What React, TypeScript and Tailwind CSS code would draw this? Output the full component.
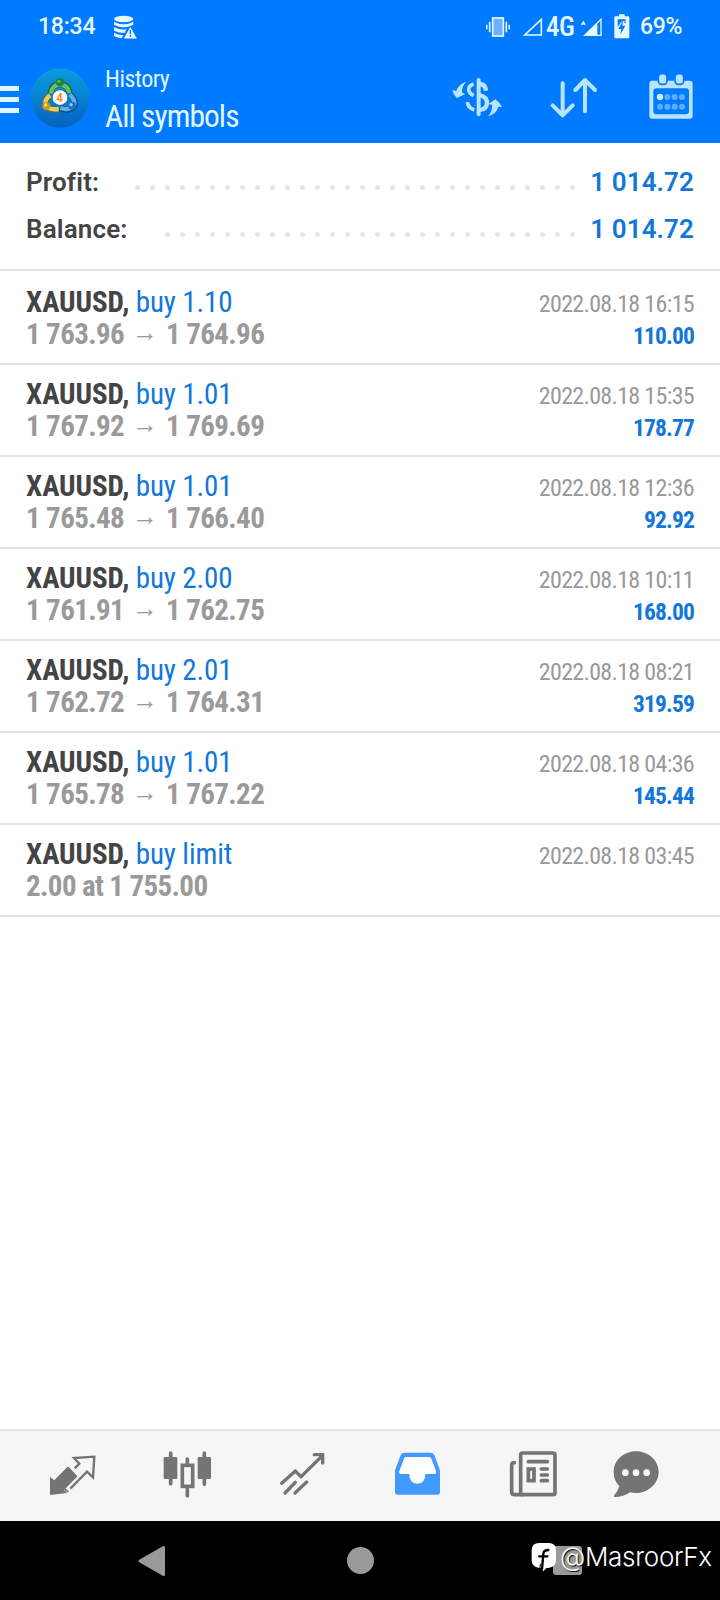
import React from 'react';

interface Deal {
  symbol: string;
  action: string;
  from: string;
  to?: string;
  time: string;
  profit?: string;
}

const deals: Deal[] = [
  { symbol: 'XAUUSD', action: 'buy 1.10', from: '1 763.96', to: '1 764.96', time: '2022.08.18 16:15', profit: '110.00' },
  { symbol: 'XAUUSD', action: 'buy 1.01', from: '1 767.92', to: '1 769.69', time: '2022.08.18 15:35', profit: '178.77' },
  { symbol: 'XAUUSD', action: 'buy 1.01', from: '1 765.48', to: '1 766.40', time: '2022.08.18 12:36', profit: '92.92' },
  { symbol: 'XAUUSD', action: 'buy 2.00', from: '1 761.91', to: '1 762.75', time: '2022.08.18 10:11', profit: '168.00' },
  { symbol: 'XAUUSD', action: 'buy 2.01', from: '1 762.72', to: '1 764.31', time: '2022.08.18 08:21', profit: '319.59' },
  { symbol: 'XAUUSD', action: 'buy 1.01', from: '1 765.78', to: '1 767.22', time: '2022.08.18 04:36', profit: '145.44' },
  { symbol: 'XAUUSD', action: 'buy limit', from: '2.00 at 1 755.00', time: '2022.08.18 03:45' },
];

const StatusBar = () => (
  <div className="flex h-[54px] items-center pl-[38px] font-['Roboto',sans-serif] text-[23px] leading-[28px] font-medium text-[#e6f9ff]">
    <span className="w-[76px] tracking-[-0.2px]">18:34</span>
    <svg className="h-6 w-6" viewBox="342 42 72 72" fill="#e6f9ff">
      <ellipse cx="371" cy="54" rx="29" ry="10" />
      <path d="M342 62q29 16 58 0v9q-29 16-58 0zM342 78q20 11 38 6l-6 12q-18 0-32-7zM342 95q14 8 28 7l-5 10q-14-1-23-7z" />
      <path d="M391 75l22 39h-44z" stroke="#007aff" strokeWidth="3" />
      <path d="M389 87h4v13h-4zM389 103h4v5h-4z" fill="#007aff" />
    </svg>

    <div className="ml-[348px] flex items-center">
      <svg className="h-6 w-6" viewBox="138 44 72 72" fill="none" stroke="#e6f9ff" strokeWidth="5">
        <rect x="158" y="53" width="32" height="54" fill="#6db0ff" />
        <path d="M149 64v32M199 64v32M140 73v14M208 73v14" />
      </svg>
      <svg className="ml-[13px] h-6 w-[20px]" viewBox="249 44 60 72" fill="none" stroke="#e6f9ff" strokeWidth="5">
        <path d="M254 104L304 57v47z" />
      </svg>
      <span className="ml-[3px] w-[34px] font-['Roboto_Condensed'] text-[27px] tracking-[-0.5px]">4G</span>
      <svg className="h-6 w-[22px]" viewBox="419 44 66 72" fill="#e6f9ff">
        <path d="M421 73l8-12 8 12z" />
        <path d="M428 107L484 52v55zM471 70v33h9V61z" fillRule="evenodd" />
      </svg>
      <svg className="ml-[12px] h-[26px] w-4" viewBox="521 41 48 78" fill="#e6f9ff">
        <path d="M526 48h10v-6h17v6h10q4 0 4 4v58q0 4-4 4h-37q-4 0-4-4V52q0-4 4-4z" />
        <path d="M532 57h24v12l-5-2 3-6-12 4-10 16z" fill="#007aff" />
        <path d="M548 60l-14 26h9l-3 17 15-27h-9z" fill="#007aff" />
      </svg>
      <span className="ml-[10px] w-[45px] text-[23px] tracking-[-0.3px]">69%</span>
    </div>
  </div>
);

const Logo = () => (
  <svg className="h-[60px] w-[60px]" viewBox="90 204 180 180">
    <defs>
      <linearGradient id="disc" x1="0" y1="0" x2="0" y2="1">
        <stop offset="0" stopColor="#0a9be0" />
        <stop offset="0.5" stopColor="#0782d3" />
        <stop offset="1" stopColor="#0560bd" />
      </linearGradient>
    </defs>
    <circle cx="180" cy="294" r="89" fill="url(#disc)" />
    <path d="M152 282q2-28 27-30 26 2 30 28" fill="none" stroke="#1c6a45" strokeWidth="19" />
    <path d="M153 281q2-26 26-28 25 2 29 26" fill="none" stroke="#6cbf62" strokeWidth="13" />
    <path d="M150 286q-17 12-15 28 8 18 42 14" fill="none" stroke="#6b6c2e" strokeWidth="19" />
    <path d="M150 286q-16 12-14 28 8 17 40 13" fill="none" stroke="#e0cf62" strokeWidth="13" />
    <path d="M209 284q18 16 15 31-12 20-44 10" fill="none" stroke="#0b4d8f" strokeWidth="19" />
    <path d="M209 284q17 16 14 30-12 19-42 10" fill="none" stroke="#62b0e8" strokeWidth="13" />
    <circle cx="180" cy="247" r="12" fill="#1d7d42" />
    <circle cx="177" cy="244" r="5" fill="#5cb75a" />
    <circle cx="139" cy="318" r="12" fill="#c39a1c" />
    <circle cx="137" cy="315" r="5" fill="#f3dc66" />
    <circle cx="216" cy="317" r="12" fill="#1b73bd" />
    <circle cx="213" cy="314" r="5" fill="#8dcdf7" />
    <circle cx="180" cy="293" r="22" fill="#fdf6ef" />
    <text x="179" y="307" textAnchor="middle" fontSize="40" fill="#f08a45" fontWeight="500">4</text>
  </svg>
);

const Header = () => (
  <header className="h-[143px] bg-[#007aff]">
    <StatusBar />
    <div className="flex h-[88px] items-center text-[#e0f7ff]">
      <div className="mt-[3px] flex w-[19px] flex-col gap-[6px]">
        <div className="h-[5px] bg-[#e0f5ff]" />
        <div className="h-[5px] bg-[#e0f5ff]" />
        <div className="h-[5px] bg-[#e0f5ff]" />
      </div>
      <div className="ml-[11px]">
        <Logo />
      </div>
      <div className="mt-[3px] ml-[15px] w-[344px] font-stretch-condensed">
        <p className="text-[24px] leading-[34px] tracking-[-0.5px]">History</p>
        <p className="text-[31.5px] leading-[42px] tracking-[-0.95px]">All symbols</p>
      </div>

      <svg className="h-[60px] w-[56px]" viewBox="27 204 168 180" fill="none" stroke="#b9e4ff" strokeWidth="11">
        <path d="M116 240v103" strokeWidth="12" strokeLinecap="round" />
        <path d="M138 272q-2-19-18-20M118 285q24 6 23 24-1 20-23 21" strokeWidth="13" />
        <path d="M101 252q-16 5-15 18 2 11 15 17M82 306q3 19 21 24" />
        <path d="M37 270l12 3q6-21 30-28-14 14-13 32l9 6-25 11q-10-10-13-24z" fill="#b9e4ff" stroke="none" />
        <path d="M186 321l-11-1q-4 20-31 29 14-15 12-35l-11-2 21-14q12 8 20 23z" fill="#b9e4ff" stroke="none" />
      </svg>
      <svg className="ml-[42px] h-[60px] w-[54px]" viewBox="321 204 162 180" fill="none" stroke="#b9e4ff" strokeWidth="12" strokeLinecap="round" strokeLinejoin="round">
        <path d="M368 250v95M338 316l30 30 30-30M435 334v-93M406 270l29-30 30 30" />
      </svg>
      <svg className="ml-[44px] h-[60px] w-[52px]" viewBox="615 204 156 180" fill="#b9e4ff">
        <path d="M637 242h112q9 0 9 9v96q0 9-9 9H637q-9 0-9-9v-96q0-9 9-9zm12 23q-9 0-9 9v60q0 9 9 9h89q9 0 9-9v-60q0-9-9-9z" fillRule="evenodd" />
        <rect x="655" y="221" width="26" height="32" rx="10" stroke="#007aff" strokeWidth="5" />
        <rect x="705" y="221" width="26" height="32" rx="10" stroke="#007aff" strokeWidth="5" />
        <circle cx="660" cy="291" r="9.500" fill="#d3f0ff" />
        <g fill="#5eaeff">
          <circle cx="682" cy="291" r="9" />
          <circle cx="704" cy="291" r="9" />
          <circle cx="726" cy="291" r="9" />
          <circle cx="660" cy="320" r="9" />
          <circle cx="682" cy="320" r="9" />
          <circle cx="704" cy="320" r="9" />
          <circle cx="726" cy="320" r="9" />
        </g>
      </svg>
    </div>
  </header>
);

const SummaryLine = ({ label, value, dots }: { label: string; value: string; dots: number }) => (
  <div className="flex h-[47px] items-center text-[26px] leading-[47px]">
    <span className="font-semibold tracking-[0.15px] text-[#444444]">{label}</span>
    <div className="mt-[10px] mr-[15px] flex flex-1 justify-end gap-[10px]">
      {Array.from({ length: dots }, (_, i) => (
        <span key={i} className="h-[5px] w-[5px] shrink-0 rounded-full bg-[#e6e6e6]" />
      ))}
    </div>
    <span className="w-[104px] text-right font-semibold tracking-[0.1px] whitespace-nowrap text-[#1277d9]">{value}</span>
  </div>
);

const DealRow = ({ deal }: { deal: Deal }) => (
  <li className="h-[92px] border-b-2 border-[#e2e2e2] px-[26px] pt-[13px] text-[29px] leading-8 font-stretch-condensed first:h-[94px] first:pt-[15px]">
    <div className="flex h-8 items-baseline justify-between">
      <p className="tracking-[-0.1px]">
        <span className="font-bold text-[#444444]">{deal.symbol},</span>{' '}
        <span className="text-[#1277d9]">{deal.action}</span>
      </p>
      <span className="text-[24px] tracking-[-0.67px] text-[#999999]">{deal.time}</span>
    </div>
    <div className="flex h-8 items-baseline justify-between">
      <p className="flex items-baseline font-bold tracking-[-0.62px] text-[#9a9a9a]">
        <span>{deal.from}</span>
        {deal.to && (
          <span className="mr-[8px] ml-[8px] w-[26px] self-start text-center font-['Liberation_Sans'] text-[26px] leading-[28px] font-bold tracking-normal">→</span>
        )}
        <span>{deal.to}</span>
      </p>
      <span className="text-[23.5px] font-bold tracking-[-0.85px] text-[#1277d9]">{deal.profit}</span>
    </div>
  </li>
);

const TabBar = () => (
  <nav className="flex h-[92px] items-center gap-[55px] border-t-2 border-[#e5e5e5] bg-[#f6f6f6] pl-[43px]">
    <svg className="h-[60px] w-[60px]" viewBox="129 78 180 180">
      <path d="M150 171l13 10 38-39q3-3 6 0l23 24q3 3 0 6l-38 38 10 9-52 6z" fill="#747474" />
      <path d="M224 145l14-14-16-17 61-4-4 62-18-17-50 51" fill="none" stroke="#747474" strokeWidth="7" />
      <path d="M194 207l11 8" stroke="#747474" strokeWidth="5" />
    </svg>
    <svg className="h-[60px] w-[60px]" viewBox="474 78 180 180" fill="#747474">
      <rect x="491" y="111" width="41" height="66" rx="4" />
      <rect x="593" y="111" width="40" height="66" rx="4" />
      <path d="M512 99v92M613 99v94M562 117v18M562 200v27" stroke="#747474" strokeWidth="11" strokeLinecap="round" />
      <rect x="547" y="136" width="31" height="63" fill="#f6f6f6" stroke="#747474" strokeWidth="11" />
    </svg>
    <svg className="h-[60px] w-[60px]" viewBox="819 78 180 180" fill="none" stroke="#747474" strokeWidth="10" strokeLinecap="round">
      <path d="M845 190l41-37 17 17 62-61M943 104h25v25M855 219l31-32M885 219l35-33" />
    </svg>
    <svg className="h-[60px] w-[60px]" viewBox="84 78 180 180">
      <path d="M134 98h77q8 0 12 7l17 46v65q0 8-8 8H113q-8 0-8-8v-65l17-46q4-7 12-7z" fill="#4299ff" />
      <path d="M138 111h69q5 0 7 5l14 37q2 9-5 9h-27q0 29-24 29t-24-29h-26q-6 0-4-9l14-37q1-5 6-5z" fill="#ffffff" />
    </svg>
    <svg className="h-[60px] w-[60px]" viewBox="429 78 180 180" fill="none" stroke="#747474" strokeWidth="11" strokeLinecap="round">
      <rect x="482" y="99" width="103" height="125" rx="6" />
      <path d="M463 128q-8 0-8 9v78q0 9 9 9h22M505 125h57M544 147h18M544 165h18M544 182h18" />
      <rect x="505" y="147" width="17" height="35" />
    </svg>
    <svg className="-ml-[12px] h-[60px] w-[60px]" viewBox="738 78 180 180" fill="#747474">
      <path d="M828 94c38 0 68 28 68 62s-30 63-68 63q-10 0-18-2-20 14-45 14-5 0-3-4 12-14 16-28-17-18-17-43c0-34 29-62 67-62z" />
      <g fill="#f6f6f6">
        <circle cx="796" cy="158" r="10" />
        <circle cx="828" cy="158" r="10" />
        <circle cx="860" cy="158" r="10" />
      </g>
    </svg>
  </nav>
);

const SystemNav = () => (
  <div className="relative flex h-[79px] items-center bg-black">
    <svg className="ml-[138px] h-8 w-7" viewBox="0 0 28 32" fill="#9a9a9a" stroke="#9a9a9a" strokeWidth="3" strokeLinejoin="round">
      <path d="M2 16L25.500 2.500v27z" />
    </svg>
    <div className="ml-[181px] h-[27px] w-[27px] rounded-full bg-[#9a9a9a]" />
    <div className="ml-[179px] h-[29px] w-[29px] rounded-[3px] bg-[#9a9a9a]" />
    <div className="absolute top-[20px] left-[531px] flex items-center">
      <svg className="h-[32px] w-[26px]" viewBox="513 366 78 96">
        <path d="M538 372h28q22 0 22 22v29q0 20-20 23l-10 2-8 9-6-10-9-1q-20-3-20-23v-29q0-22 23-22z" fill="#ffffff" />
        <path d="M546 452l4-48q1-12 18-11M535 412h30" fill="none" stroke="#000000" strokeWidth="7" />
        <path d="M541 434l-1 14" stroke="#000000" strokeWidth="3" />
      </svg>
      <span className="ml-[3px] font-['Inter'] text-[26px] leading-8 font-light tracking-[-0.3px] text-white [text-shadow:1px_1px_1px_#000]">@MasroorFx</span>
    </div>
  </div>
);

export default function App() {
  return (
    <div className="flex h-[1600px] w-[720px] flex-col overflow-hidden bg-white font-['Roboto_Condensed','Roboto',sans-serif]">
      <Header />
      <section className="h-[128px] border-b-2 border-[#e2e2e2] px-[26px] pt-[16px] font-['Roboto',sans-serif]">
        <SummaryLine label="Profit:" value="1 014.72" dots={30} />
        <SummaryLine label="Balance:" value="1 014.72" dots={28} />
      </section>
      <ul className="flex-1">
        {deals.map((deal) => (
          <DealRow key={deal.time} deal={deal} />
        ))}
      </ul>
      <TabBar />
      <SystemNav />
    </div>
  );
}
